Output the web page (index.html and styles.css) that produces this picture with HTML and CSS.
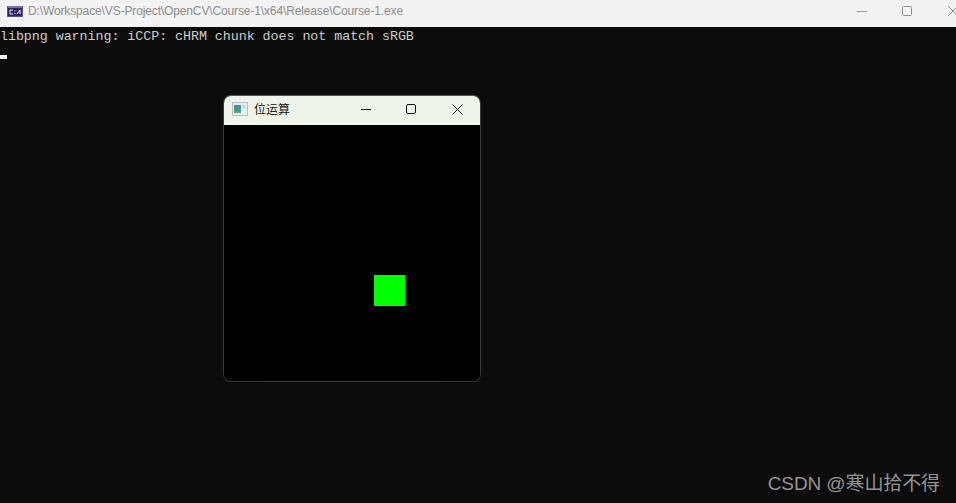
FILE: index.html
```html
<!DOCTYPE html>
<html lang="zh">
<head>
<meta charset="utf-8">
<title>Course-1</title>
<link rel="stylesheet" href="styles.css">
</head>
<body>
<div class="console-app">
  <header class="titlebar">
    <svg class="app-icon" width="16" height="11" viewBox="0 0 16 11"><rect width="16" height="11" fill="#5f4aa6"/><rect x="1" y="2" width="14" height="8" fill="#33235f"/><rect x="1" y="0.5" width="14" height="1" fill="#9c8fd0"/><path d="M3 4h3M3 4v4M3 8h3M8 4.5v1M8 7v1M10 8l3-4M13 4v4" stroke="#e8e8f4" stroke-width="1" fill="none"/></svg>
    <span class="path">D:\Workspace\VS-Project\OpenCV\Course-1\x64\Release\Course-1.exe</span>
    <div class="controls">
      <svg class="ctl" width="10" height="10" viewBox="0 0 10 10"><path d="M0 5.5h10" stroke="#9a9a9a" stroke-width="1"/></svg>
      <svg class="ctl ctl-max" width="10" height="10" viewBox="0 0 10 10"><rect x=".5" y=".5" width="9" height="9" rx="1" stroke="#8f8f8f" fill="none"/></svg>
      <svg class="ctl ctl-close" width="10" height="10" viewBox="0 0 10 10"><path d="M0 0l10 10M10 0L0 10" stroke="#8f8f8f" stroke-width="1"/></svg>
    </div>
  </header>
  <main class="console">
    <div class="line">libpng warning: iCCP: cHRM chunk does not match sRGB</div>
    <div class="cursor"></div>

    <section class="window">
      <div class="win-bar">
        <svg class="win-icon" width="16" height="14" viewBox="0 0 16 14"><defs><linearGradient id="pane" x1="0" y1="0" x2="0" y2="1"><stop offset="0" stop-color="#5a86b8"/><stop offset=".5" stop-color="#3f9488"/><stop offset="1" stop-color="#5fae7c"/></linearGradient></defs><rect x=".5" y=".5" width="15" height="13" fill="#e9eeee" stroke="#b9bdc2"/><rect x="2" y="3" width="7" height="8" fill="url(#pane)"/><rect x="10" y="3" width="4" height="3" fill="#bfe0d8"/><rect x="10" y="7" width="4" height="4" fill="#e4f2ec"/></svg>
        <span class="win-title">位运算</span>
        <div class="win-controls">
          <svg width="10" height="10" viewBox="0 0 10 10"><path d="M0 5.5h10" stroke="#111" stroke-width="1"/></svg>
          <svg class="wc-max" width="10" height="10" viewBox="0 0 10 10"><rect x=".5" y=".5" width="9" height="9" rx="1.5" stroke="#111" fill="none"/></svg>
          <svg class="wc-close" width="11" height="11" viewBox="0 0 11 11"><path d="M.5.5l10 10M10.5.5l-10 10" stroke="#111" stroke-width="1"/></svg>
        </div>
      </div>
      <div class="win-canvas"><div class="green"></div></div>
    </section>
  </main>
  <div class="watermark">CSDN @寒山拾不得</div>
</div>
</body>
</html>
```
FILE: styles.css
```css
* { box-sizing: border-box; }
html, body { margin: 0; height: 100%; overflow: hidden; background: #0c0c0c; }
.console-app { display: flex; flex-direction: column; width: 956px; height: 503px; position: relative; }
.titlebar { display: flex; align-items: center; height: 27px; flex: none; padding-left: 7px; padding-bottom: 5px; background: #f3f3f3; font: 12px/16px "Liberation Sans", Arial, sans-serif; color: #8c8c8c; overflow: hidden; }
.app-icon { flex: none; margin-right: 5px; }
.path { letter-spacing: -.13px; white-space: nowrap; }
.controls { margin-left: auto; display: flex; align-items: center; flex: none; width: 99px; }
.ctl { flex: none; }
.ctl-max { margin-left: 35px; }
.ctl-close { margin-left: 36px; }
.console { flex: 1; position: relative; background: #0c0c0c; }
.line { height: 19px; padding-top: 1px; font: 13.33px/18px "Liberation Mono", "Courier New", monospace; letter-spacing: -.04px; color: #cccccc; white-space: pre; }
.cursor { width: 7px; height: 4px; margin-top: 9px; background: #f2f2f2; }
.window { position: absolute; left: 223px; top: 68px; width: 258px; height: 287px; display: flex; flex-direction: column; border: 1px solid #3a3a3a; border-top-color: #555; border-radius: 8px; overflow: hidden; background: #000; box-shadow: 0 10px 40px rgba(255,255,255,.012); }
.win-bar { display: flex; align-items: center; height: 29px; flex: none; padding-left: 8px; padding-bottom: 3px; background: #eff4ea; font: 12px/16px "Noto Sans CJK SC", sans-serif; color: #111; }
.win-icon { flex: none; margin-right: 6px; }
.win-controls { display: flex; align-items: center; margin-left: 71px; }
.win-controls svg { flex: none; }
.wc-max { margin-left: 35px; }
.wc-close { margin-left: 36px; }
.win-canvas { flex: 1; position: relative; background: #000; }
.green { position: absolute; left: 150px; top: 150px; width: 31px; height: 31px; background: #00ff00; }
.watermark { position: absolute; right: 16px; bottom: 7px; font: 19px/24px "Liberation Sans", "Noto Sans CJK SC", sans-serif; letter-spacing: -.1px; color: #949494; white-space: nowrap; }
```
